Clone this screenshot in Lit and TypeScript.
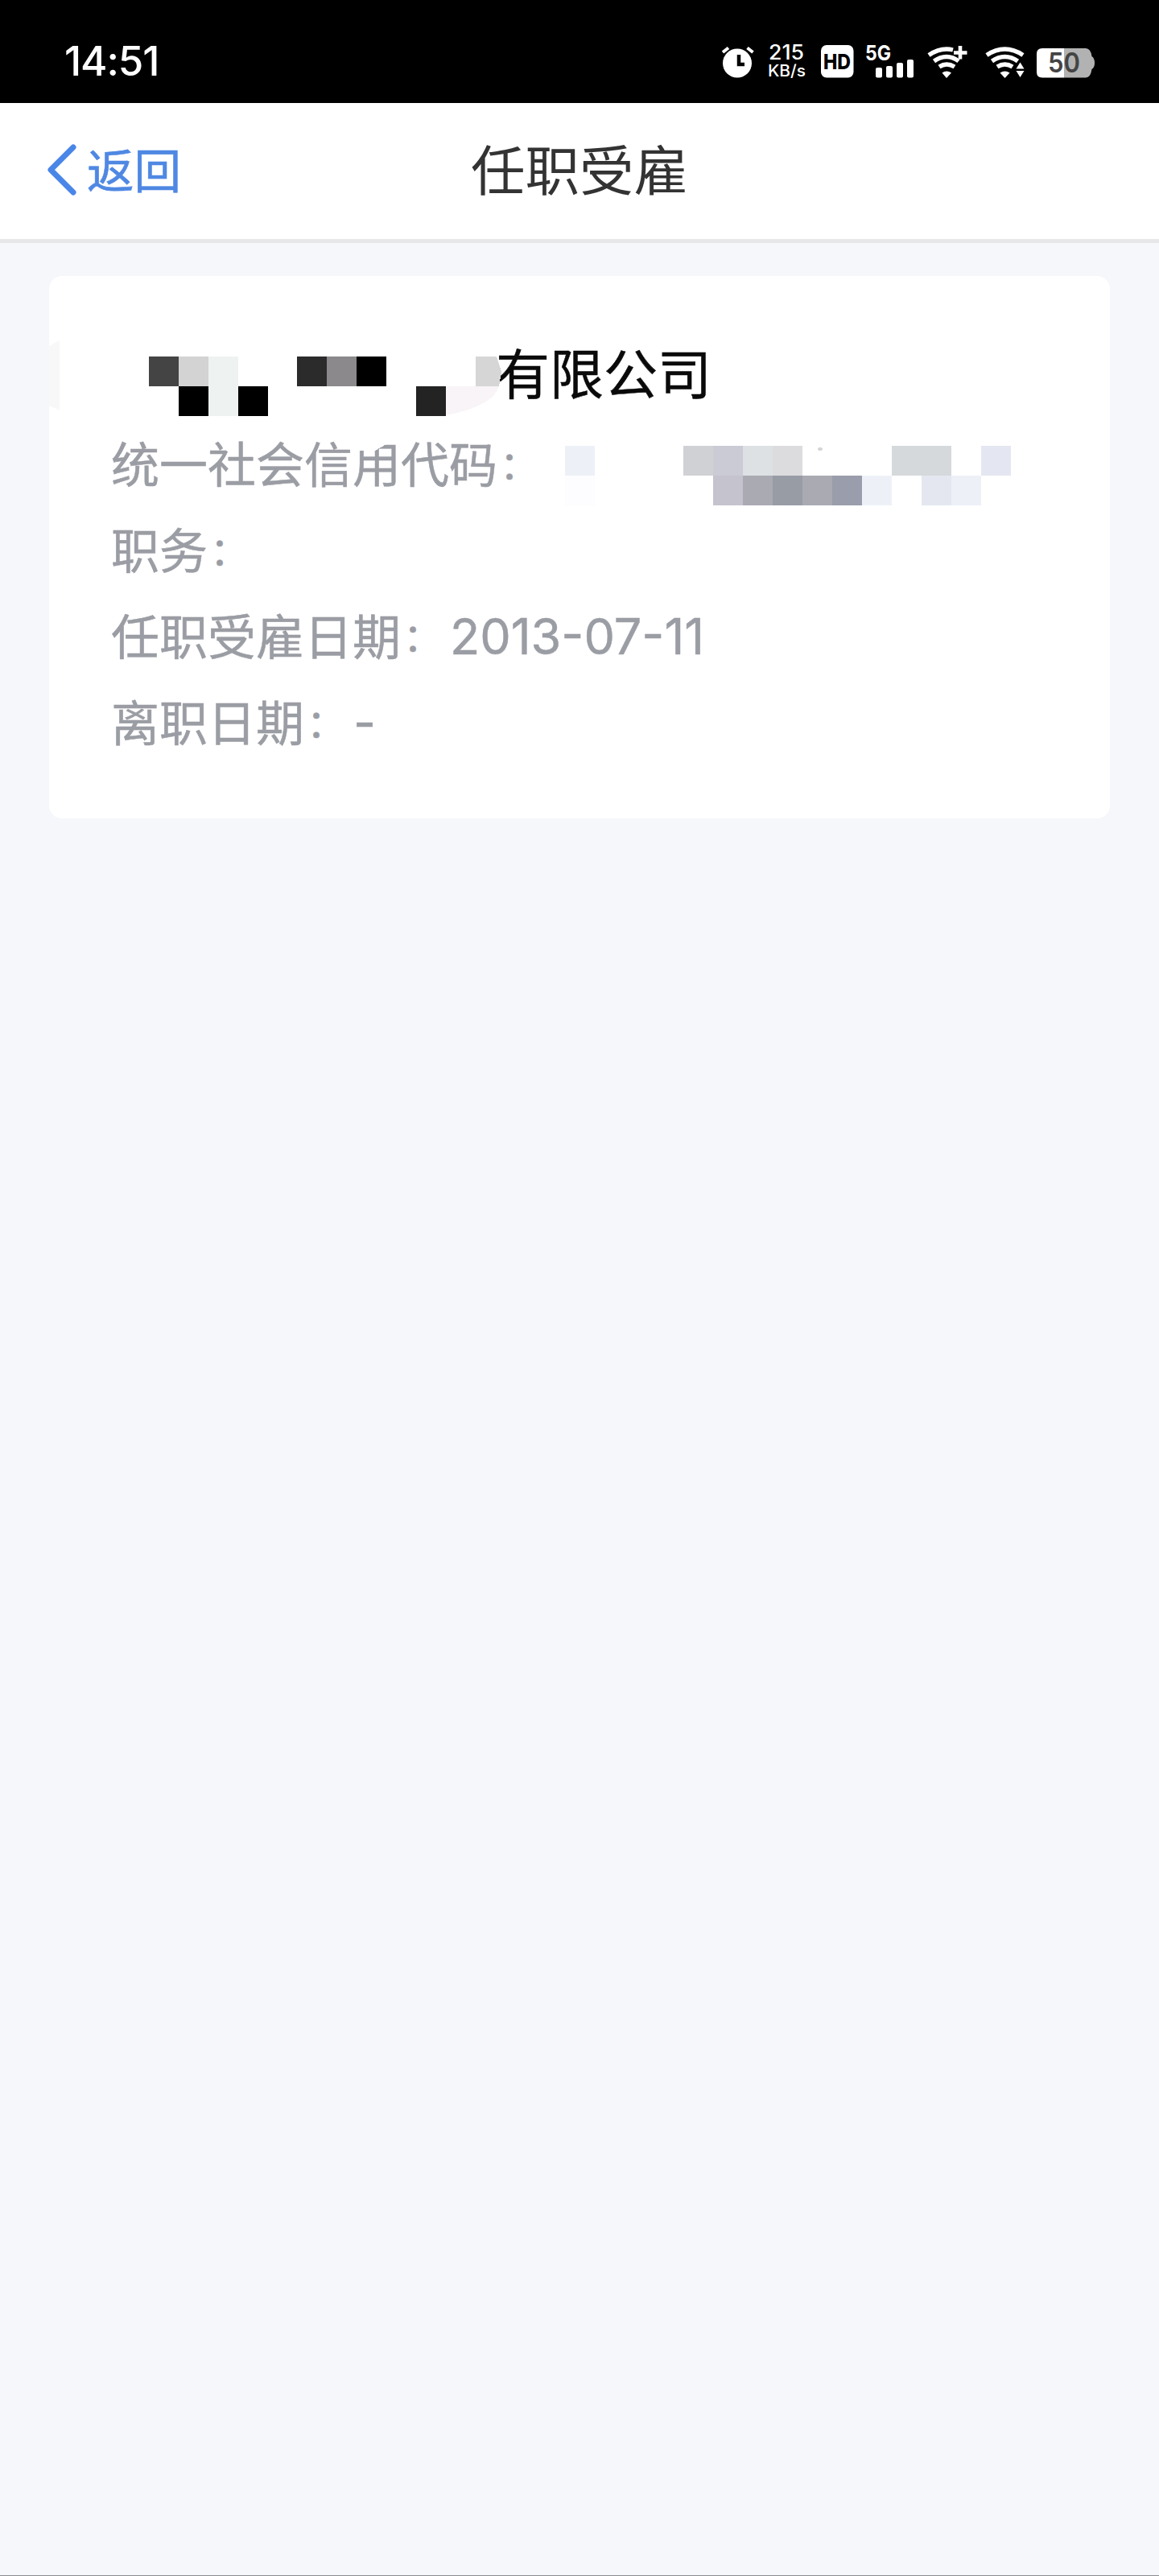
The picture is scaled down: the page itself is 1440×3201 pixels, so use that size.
import { LitElement, html, svg, css } from "lit";
import { customElement } from "lit/decorators.js";

type Cell = [number, number, number, number, string];

const NAME_CELLS: Cell[] = [
  [185, 443, 37, 37, "#444444"],
  [222, 443, 37, 37, "#d3d3d3"],
  [259, 443, 37, 74, "#eef2f1"],
  [222, 480, 37, 37, "#000000"],
  [296, 480, 37, 37, "#000000"],
  [369, 443, 37, 37, "#2b2b2b"],
  [406, 443, 37, 37, "#8b898b"],
  [443, 443, 37, 37, "#000000"],
  [517, 480, 37, 37, "#232323"],
];

const CODE_CELLS: Cell[] = [
  [702, 554, 37, 37, "#edf1f7"],
  [702, 591, 37, 37, "#fdfcff"],
  [849, 554, 37, 37, "#cfd1d5"],
  [886, 554, 37, 37, "#cacbd5"],
  [923, 554, 37, 37, "#dde1e4"],
  [960, 554, 37, 37, "#dcdcde"],
  [886, 591, 37, 37, "#c5c4ce"],
  [923, 591, 37, 37, "#aaaab3"],
  [960, 591, 37, 37, "#989ca5"],
  [997, 591, 37, 37, "#a9aab2"],
  [1034, 591, 37, 37, "#9a9dab"],
  [1071, 591, 37, 37, "#edf1f7"],
  [1108, 554, 74, 37, "#d5d9db"],
  [1145, 591, 37, 37, "#e4e7f0"],
  [1182, 591, 37, 37, "#edf0f6"],
  [1219, 554, 37, 37, "#e4e7f1"],
];

const cells = (list: Cell[]) =>
  list.map(([x, y, w, h, f]) => svg`<rect x=${x} y=${y} width=${w} height=${h} fill=${f}></rect>`);

@customElement("status-bar")
export class StatusBar extends LitElement {
  static styles = css`
    :host {
      display: flex;
      height: 128px;
      box-sizing: border-box;
      padding: 24px 0 0 80px;
      background: #000;
      color: #fff;
      justify-content: space-between;
    }
    .time {
      font: 500 51px/104px Inter, sans-serif;
      letter-spacing: -1.1px;
    }
    .icons {
      display: block;
      width: 480px;
      height: 80px;
      margin-right: 70px;
      margin-top: 12px;
      font-family: Inter, sans-serif;
    }
  `;
  render() {
    return html`
      <span class="time">14:51</span>
      <svg class="icons" viewBox="890 36 480 80" fill="#fff">
        <circle cx="916" cy="78.5" r="18"></circle>
        <path d="M898 65 L905 59.500 M935.500 65 L928.500 59.500" stroke="#fff" stroke-width="4"></path>
        <path d="M918 68 V80 H925" fill="none" stroke="#000" stroke-width="4.500"></path>
        <text x="955" y="74" font-size="25" font-weight="500" textLength="44" lengthAdjust="spacingAndGlyphs">215</text>
        <text x="954" y="95" font-size="20" font-weight="500" textLength="47" lengthAdjust="spacingAndGlyphs">KB/s</text>
        <rect x="1020" y="56" width="40.500" height="40.500" rx="7"></rect>
        <text x="1023" y="85.500" font-size="26" font-weight="800" fill="#000" textLength="34" lengthAdjust="spacingAndGlyphs">HD</text>
        <text x="1075" y="75" font-size="26" font-weight="700" textLength="32" lengthAdjust="spacingAndGlyphs">5G</text>
        <rect x="1088" y="84" width="8" height="12.500" rx="2"></rect>
        <rect x="1101" y="82" width="8" height="14.500" rx="2"></rect>
        <rect x="1114" y="78" width="8" height="18.500" rx="2"></rect>
        <rect x="1127" y="74" width="8" height="22.500" rx="2"></rect>
        <g fill="none" stroke="#fff" stroke-width="5.400">
          <path d="M1154 68.500 Q1165 61 1176 61 Q1180 61 1184 62"></path>
          <path d="M1160.500 76 Q1168 70.500 1176 70.500 Q1184 70.500 1191 76"></path>
          <path d="M1167 83 Q1176 77 1186 83"></path>
          <path d="M1193 57 V73.500 M1185 65.500 H1201.500" stroke-width="4.600"></path>
          <path d="M1226 68.500 Q1237 61 1248.500 61 Q1260 61 1271 68.500"></path>
          <path d="M1232.500 76 Q1240 70.500 1248.500 70.500 Q1257 70.500 1264.500 76"></path>
          <path d="M1239 83 Q1248.500 77 1258 83"></path>
        </g>
        <path d="M1170.500 90.500 Q1176 86.500 1182 90.500 L1176 97 Z"></path>
        <path d="M1242.500 90.500 Q1248.500 86.500 1254.500 90.500 L1248.500 97 Z"></path>
        <path d="M1267.500 77.500 L1272.500 85.500 H1262.500 Z M1267.500 96 L1272.500 88 H1262.500 Z"></path>
        <path d="M1295 60 H1322 V96.500 H1295 Q1288 96.500 1288 89.500 V67 Q1288 60 1295 60 Z"></path>
        <path d="M1322 60 H1349 Q1355 60 1356.500 70 Q1360 72 1360 78.500 Q1360 84 1356.500 86 Q1355 96.500 1349 96.500 H1322 Z" fill="#b2b2b2"></path>
        <text x="1302" y="90" font-size="34" font-weight="600" fill="#444" textLength="40" lengthAdjust="spacingAndGlyphs">50</text>
      </svg>
    `;
  }
}

@customElement("nav-header")
export class NavHeader extends LitElement {
  static styles = css`
    :host {
      display: grid;
      grid-template-columns: 1fr auto 1fr;
      align-items: center;
      height: 174px;
      box-sizing: border-box;
      padding: 0 58px 4px;
      border-bottom: 5px solid #e7e7e9;
      background: #fff;
      font-family: "Noto Sans CJK SC", sans-serif;
    }
    .back {
      display: flex;
      align-items: center;
      gap: 12px;
      color: #4f88e3;
      font-size: 58.500px;
      line-height: 84px;
    }
    .back span {
      margin-top: -4px;
      -webkit-text-stroke: 0.6px currentColor;
    }
    .chevron {
      width: 38px;
      height: 64px;
    }
    .title {
      margin-top: -6px;
      color: #333;
      font-size: 67.500px;
      line-height: 96px;
    }
  `;
  render() {
    return html`
      <div class="back">
        <svg class="chevron" viewBox="0 0 38 64" fill="none" stroke="#4a86e8" stroke-width="7" stroke-linecap="round" stroke-linejoin="round">
          <path d="M33 4 L5 32 L33 60"></path>
        </svg>
        <span>返回</span>
      </div>
      <div class="title">任职受雇</div>
    `;
  }
}

@customElement("app-root")
export class AppRoot extends LitElement {
  static styles = css`
    :host {
      display: flex;
      flex-direction: column;
      position: relative;
      width: 1440px;
      height: 3201px;
      box-sizing: border-box;
      border-bottom: 1px solid #8a8b8e;
      background: #f5f7fb;
      overflow: hidden;
    }
    .card {
      margin: 41px 61px 0;
      height: 674px;
      box-sizing: border-box;
      padding: 66px 77px 0;
      border-radius: 16px;
      background: #fff;
      font-family: "Noto Sans CJK SC", sans-serif;
    }
    .company {
      padding-left: 478px;
      margin-bottom: 7px;
      color: #0a0a0a;
      font-size: 67px;
      line-height: 104px;
      -webkit-text-stroke: 0.5px currentColor;
    }
    .row {
      display: flex;
      height: 107px;
      color: #9b9da4;
      font-size: 60px;
      line-height: 107px;
      white-space: nowrap;
      -webkit-text-stroke: 0.5px currentColor;
    }
    .colon {
      width: 60px;
      font-size: 48px;
      transform: translate(3px, 1px);
    }
    .value {
      margin-top: 3px;
      font-family: Inter, sans-serif;
      font-size: 62px;
      transform: translateX(1px) scaleX(0.985);
      transform-origin: left;
    }
    .mosaic {
      position: absolute;
      left: 0;
      top: 0;
      width: 1440px;
      height: 700px;
    }
  `;

  private row(label: string, value = "") {
    return html`<div class="row">
      <span>${label}</span><span class="colon">：</span><span class="value">${value}</span>
    </div>`;
  }

  render() {
    return html`
      <status-bar></status-bar>
      <nav-header></nav-header>
      <section class="card">
        <div class="company">有限公司</div>
        ${this.row("统一社会信用代码")}
        ${this.row("职务")}
        ${this.row("任职受雇日期", "2013-07-11")}
        ${this.row("离职日期", "-")}
      </section>
      <svg class="mosaic" viewBox="0 0 1440 700" shape-rendering="crispEdges">
        <path d="M61 430 L74 423 V510 L61 504 Z" fill="#f8f8f8"></path>
        ${cells(NAME_CELLS)}
        <path d="M591 443 H617 L623 462 L620 480 H591 Z" fill="#d6d6d6"></path>
        <path d="M554 480 H620 Q612 505 554 516 Z" fill="#f8f4f7"></path>
        <path d="M440 545 H492 V551 L480 552 L466 560 H440 Z" fill="#fff"></path>
        ${cells(CODE_CELLS)}
        <ellipse cx="1019" cy="558" rx="3" ry="2" fill="#d6d6d8"></ellipse>
      </svg>
    `;
  }
}
